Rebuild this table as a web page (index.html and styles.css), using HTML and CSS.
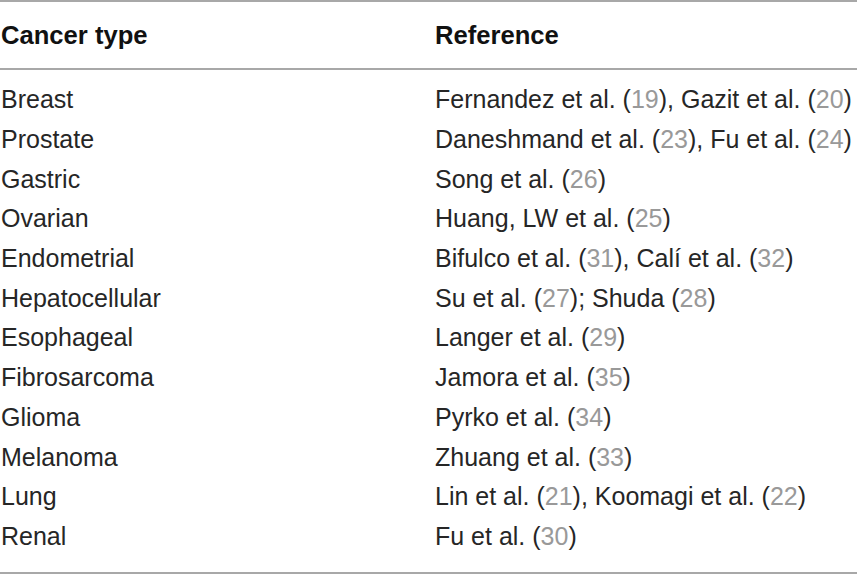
FILE: index.html
```html
<!DOCTYPE html>
<html>
<head>
<meta charset="utf-8">
<link rel="stylesheet" href="styles.css">
</head>
<body>
<table class="tbl">
  <thead>
    <tr><th class="c1">Cancer type</th><th class="c2">Reference</th></tr>
  </thead>
  <tbody>
    <tr><td class="c1">Breast</td><td class="c2">Fernandez et al. (<span class="ref">19</span>), Gazit et al. (<span class="ref">20</span>)</td></tr>
    <tr><td class="c1">Prostate</td><td class="c2">Daneshmand et al. (<span class="ref">23</span>), Fu et al. (<span class="ref">24</span>)</td></tr>
    <tr><td class="c1">Gastric</td><td class="c2">Song et al. (<span class="ref">26</span>)</td></tr>
    <tr><td class="c1">Ovarian</td><td class="c2">Huang, LW et al. (<span class="ref">25</span>)</td></tr>
    <tr><td class="c1">Endometrial</td><td class="c2">Bifulco et al. (<span class="ref">31</span>), Calí et al. (<span class="ref">32</span>)</td></tr>
    <tr><td class="c1">Hepatocellular</td><td class="c2">Su et al. (<span class="ref">27</span>); Shuda (<span class="ref">28</span>)</td></tr>
    <tr><td class="c1">Esophageal</td><td class="c2">Langer et al. (<span class="ref">29</span>)</td></tr>
    <tr><td class="c1">Fibrosarcoma</td><td class="c2">Jamora et al. (<span class="ref">35</span>)</td></tr>
    <tr><td class="c1">Glioma</td><td class="c2">Pyrko et al. (<span class="ref">34</span>)</td></tr>
    <tr><td class="c1">Melanoma</td><td class="c2">Zhuang et al. (<span class="ref">33</span>)</td></tr>
    <tr><td class="c1">Lung</td><td class="c2">Lin et al. (<span class="ref">21</span>), Koomagi et al. (<span class="ref">22</span>)</td></tr>
    <tr><td class="c1">Renal</td><td class="c2">Fu et al. (<span class="ref">30</span>)</td></tr>
  </tbody>
</table>
</body>
</html>
```
FILE: styles.css
```css
html, body {
  margin: 0;
  padding: 0;
  background: #fff;
}
body {
  font-family: "Liberation Sans", Arial, sans-serif;
  font-size: 25px;
  color: #262626;
}
.tbl {
  width: 857px;
  border-collapse: collapse;
  border-top: 2px solid #a8a8a8;
  border-bottom: 2px solid #a8a8a8;
}
.tbl th, .tbl td {
  padding: 0;
  text-align: left;
  vertical-align: middle;
  white-space: nowrap;
}
.tbl th {
  height: 66px;
  font-size: 25.6px;
  font-weight: bold;
  color: #111;
  border-bottom: 2px solid #a8a8a8;
}
.tbl td {
  height: 39.7px;
}
.c1 {
  width: 434px;
  padding-left: 1px !important;
}
.tbl tbody tr:first-child td {
  padding-top: 10px;
}
.tbl tbody tr:last-child td {
  padding-bottom: 16px;
}
.ref {
  color: #999;
}
```
